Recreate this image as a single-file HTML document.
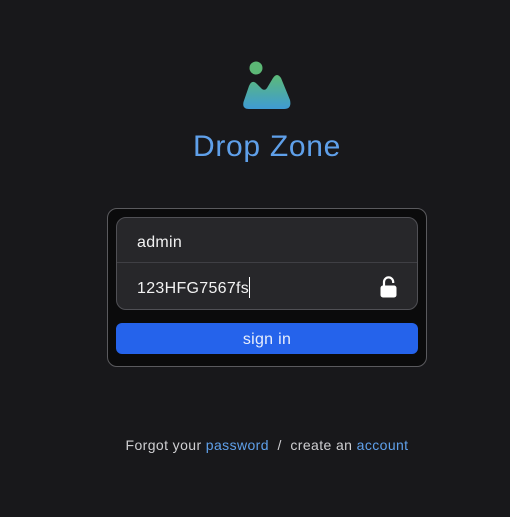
<!DOCTYPE html>
<html><head><meta charset="utf-8"><style>
html,body{margin:0;padding:0}
body{width:510px;height:517px;background:#18181b;font-family:"Liberation Sans",sans-serif;position:relative;overflow:hidden}
.title{position:absolute;left:12px;width:510px;top:127px;text-align:center;color:#5fa0ea;font-size:30px;line-height:40px;letter-spacing:0.7px}
.card{position:absolute;left:107px;top:208px;width:318px;height:157px;background:#0b0b0c;border:1px solid #5a5a5e;border-radius:10px}
.inner{position:absolute;left:116px;top:217px;width:300px;height:91px;background:#27272a;border:1px solid #505055;border-radius:10px}
.div{position:absolute;left:117px;top:262px;width:300px;height:1px;background:#3f3f44}
.t{position:absolute;left:137px;color:#f2f2f2;font-size:16px;line-height:20px;letter-spacing:0.3px}
.btn{position:absolute;left:116px;top:323px;width:302px;height:31px;background:#2563eb;border-radius:6px;color:#e8eefc;font-size:16px;line-height:33px;text-align:center;letter-spacing:0.3px}
.foot{position:absolute;left:12px;width:510px;top:436px;text-align:center;color:#cfcfd2;font-size:14px;line-height:18px;letter-spacing:0.4px}
.foot a{color:#5fa0ea;text-decoration:none}
</style></head><body>
<svg style="position:absolute;left:236px;top:56px" width="60" height="56" viewBox="236 56 60 56">
<defs><linearGradient id="g" x1="0" y1="0" x2="0" y2="1"><stop offset="0" stop-color="#5cba78"/><stop offset="1" stop-color="#3f9bd4"/></linearGradient></defs>
<circle cx="256" cy="68" r="6.5" fill="#5cb876"/>
<path d="M249 109 Q242 109 243.5 102 L249 86 Q252 79 257 84 L262 89 Q265 91 267 88 L273 78 Q277 72 281 78 L290 100 Q292 109 284 109 Z" fill="url(#g)"/>
</svg>
<div class="title">Drop Zone</div>
<div class="card"></div>
<div class="inner"></div>
<div class="div"></div>
<div class="t" style="top:233px">admin</div>
<div class="t" style="top:277px">123HFG7567fs<span style="display:inline-block;width:1px;height:21px;background:#fff;vertical-align:-5px"></span></div>
<svg style="position:absolute;left:379px;top:275px" width="20" height="24" viewBox="0 0 20 24">
<path d="M5 11 V7 A4.6 4.6 0 0 1 14.2 7 V8" fill="none" stroke="#fff" stroke-width="2.2"/>
<rect x="1.5" y="10.5" width="16" height="12" rx="2.5" fill="#fff"/>
</svg>
<div class="btn">sign in</div>
<div class="foot">Forgot your <a>password</a>&nbsp;&nbsp;/&nbsp;&nbsp;create an <a>account</a></div>
</body></html>
